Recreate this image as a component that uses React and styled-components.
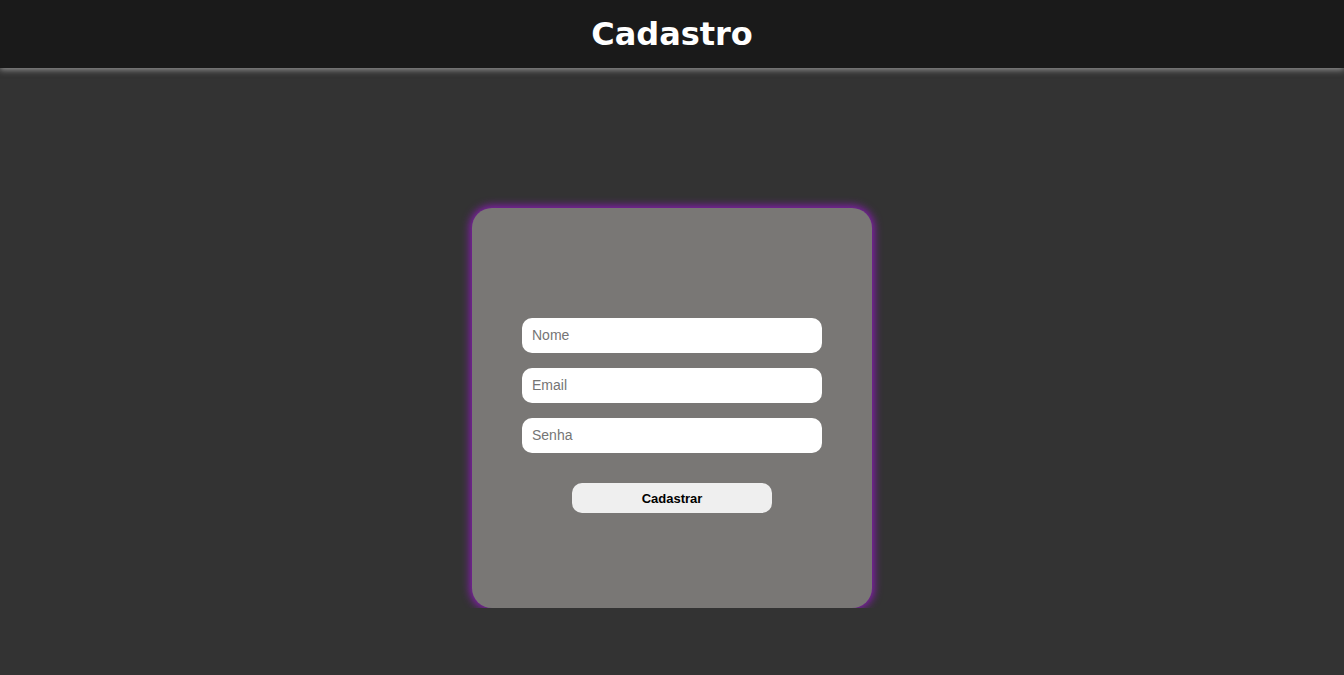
import React from 'react'
import styled, { createGlobalStyle } from 'styled-components'

const GlobalStyle = createGlobalStyle`
  * {
    box-sizing: border-box;
  }
  body {
    margin: 0;
    background-color: #333333;
    font-family: "Liberation Sans", Arial, sans-serif;
  }
`

const Header = styled.header`
  height: 68px;
  background-color: #1a1a1a;
  display: flex;
  align-items: center;
  justify-content: center;
  box-shadow: 0 2px 6px rgba(220, 220, 220, 0.55);
  position: relative;
`

const Title = styled.h1`
  margin: 0;
  color: #fff;
  font-family: "DejaVu Sans", Verdana, sans-serif;
  font-weight: bold;
  font-size: 32px;
`

const Main = styled.main`
  display: flex;
  justify-content: center;
  padding-top: 140px;
`

const Card = styled.form`
  width: 400px;
  height: 400px;
  background-color: #797775;
  border-radius: 20px;
  box-shadow: 0 0 8px 2px #8c1cb8;
  display: flex;
  flex-direction: column;
  align-items: center;
  justify-content: center;
  gap: 15px;
  padding-top: 15px;
`

const Input = styled.input`
  width: 300px;
  height: 35px;
  border: none;
  border-radius: 10px;
  background: #fff;
  padding: 0 10px 1px;
  font-family: "Liberation Sans", Arial, sans-serif;
  font-size: 14px;
  outline: none;

  &::placeholder {
    color: #757575;
  }
`

const Button = styled.button`
  width: 200px;
  height: 30px;
  margin-top: 15px;
  border: none;
  border-radius: 10px;
  background-color: #efefef;
  color: #000;
  font-family: "Liberation Sans", Arial, sans-serif;
  font-weight: bold;
  font-size: 13px;
  cursor: pointer;
`

const App = () => {
  return (
    <>
      <GlobalStyle />
      <Header>
        <Title>Cadastro</Title>
      </Header>
      <Main>
        <Card onSubmit={e => e.preventDefault()}>
          <Input type="text" placeholder="Nome" />
          <Input type="email" placeholder="Email" />
          <Input type="password" placeholder="Senha" />
          <Button type="submit">Cadastrar</Button>
        </Card>
      </Main>
    </>
  )
}

export default App
